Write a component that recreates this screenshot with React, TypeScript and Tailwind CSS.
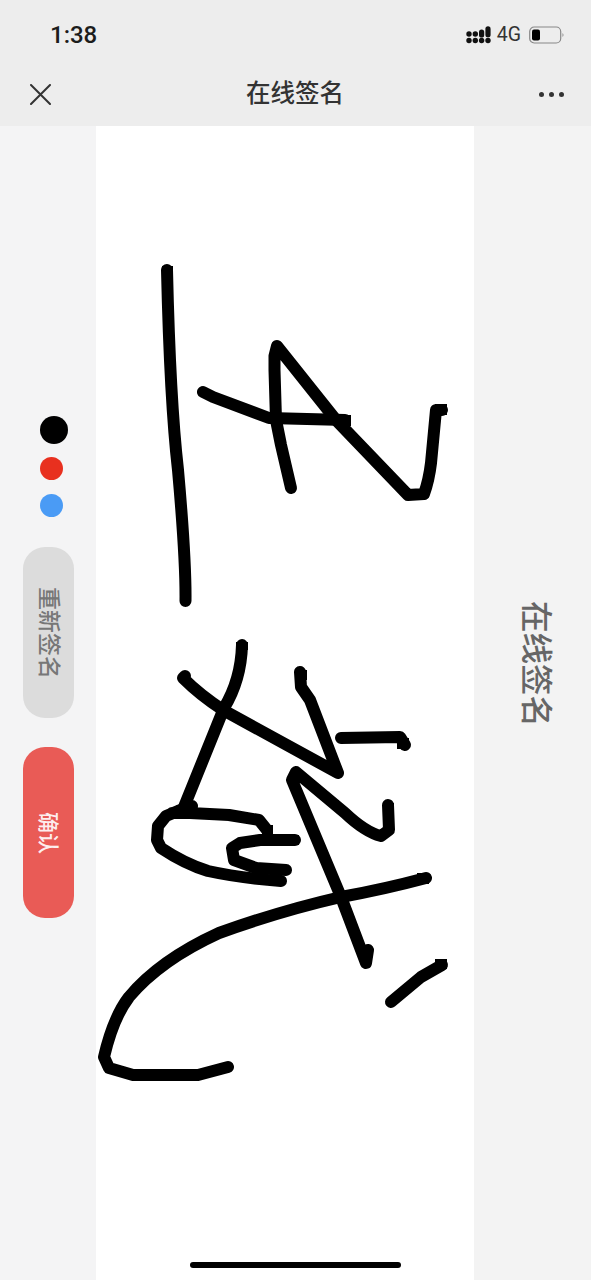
import React from 'react';

const CJK = "font-['Liberation_Sans','Noto_Sans_CJK_SC',sans-serif]";

// pen strokes, in page coordinates (the svg viewBox starts at the panel's corner)
const strokes = [
  'M167 270 Q170 400 178 470 Q186 560 185.500 601',
  'M203 392 L213 397 L269 418 L345 420',
  'M291 488 L281 445 L276 420 L274.500 370 L274.500 356 L277 346 L336 420 L408 495 L424 494 Q429 480 431 463 L436 410 L442 410',
  'M242 645 Q241 680 224 708 L184 807',
  'M192 806 L178 811 L166 816 L158 826 L157 840 L161 848 Q185 864 208 871 Q240 878 281 881 M172 813 L190 813 L229 815 L259 820 L267 830',
  'M295 840 L260 840 L240 843 L232 848 L234 860 L256 868 L286 870',
  'M185 676 L183 678 Q200 695 223 710 L338 773 L310 700 L301 687 L300 672',
  'M341 738 L400 737 L405 745',
  'M388 805 L389 830 L381 836 Q365 832 345 813 L296 772 L292 780 L341 897 L366 963 L368 950',
  'M426 878 Q385 889 341 897 Q280 911 219 933 Q160 960 129 997 Q113 1018 104 1057 L109 1068 L133 1075 L198 1075 L228 1067',
  'M391 1002 L421 977 L442 965',
];

// the pen's squared-off ends
const tips = [
  [162, 266, 11, 12],
  [338, 415, 13, 11],
  [435, 404, 12, 11],
  [236, 642, 12, 8],
  [295, 670, 12, 10],
  [397, 738, 12, 11],
  [383, 803, 11, 10],
  [288, 835, 11, 10],
  [417, 873, 12, 11],
  [435, 959, 12, 10],
  [262, 825, 11, 10],
];

const Signature: React.FC = () => (
  <svg viewBox="96 126 378 1154" className="w-full h-full block">
    {strokes.map((d, i) => (
      <path key={i} d={d} fill="none" stroke="#000" strokeWidth="12" strokeLinecap="round" strokeLinejoin="round" />
    ))}
    {tips.map(([x, y, w, h], i) => (
      <rect key={i} x={x} y={y} width={w} height={h} fill="#000" />
    ))}
  </svg>
);

const SignalIcon: React.FC = () => (
  <svg width="25" height="18" viewBox="0 0 25 18" fill="#111">
    <circle cx="3" cy="8" r="2.700" />
    <circle cx="3" cy="14.500" r="2.700" />
    <circle cx="9.300" cy="8" r="2.700" />
    <circle cx="9.300" cy="14.500" r="2.700" />
    <rect x="13" y="3.500" width="5.200" height="8" rx="2.600" />
    <circle cx="15.600" cy="14.500" r="2.700" />
    <rect x="19.400" y="0.300" width="5.200" height="11" rx="2.600" />
    <circle cx="22" cy="14.500" r="2.700" />
  </svg>
);

const BatteryIcon: React.FC = () => (
  <svg width="36" height="18" viewBox="0 0 36 18">
    <rect x="0.700" y="1" width="31" height="16" rx="4.500" fill="none" stroke="#888" strokeWidth="1.200" />
    <rect x="3" y="3.500" width="8" height="11" rx="2" fill="#000" />
    <path d="M33.500 7 Q35.500 9 33.500 11 Z" fill="#888" />
  </svg>
);

const App: React.FC = () => {
  return (
    <div className={`relative h-[1280px] w-full overflow-hidden flex flex-col bg-[#f4f4f5] ${CJK}`}>
      {/* status bar + wechat nav */}
      <div className="shrink-0 h-[126px] bg-[#ededed]">
        <div className="h-[70px] flex items-center justify-between pl-[50px] pr-[26px] font-['Roboto',sans-serif]">
          <span className="text-[24px] font-medium text-[#1c1c1c] leading-none">1:38</span>
          <div className="flex items-center">
            <SignalIcon />
            <span className="ml-[6px] mr-[8px] text-[19.500px] text-[#333] leading-none">4G</span>
            <BatteryIcon />
          </div>
        </div>
        <div className="h-[48px] flex items-center justify-between pl-[30px] pr-[27px]">
          <svg width="21" height="21" viewBox="0 0 21 21" stroke="#333" strokeWidth="2" strokeLinecap="round">
            <path d="M1 1 L20 20 M20 1 L1 20" />
          </svg>
          <span className="text-[24.500px] font-medium text-[#333] leading-none">在线签名</span>
          <div className="flex items-center gap-[5px]">
            <span className="w-[5px] h-[5px] rounded-full bg-[#333]"></span>
            <span className="w-[5px] h-[5px] rounded-full bg-[#333]"></span>
            <span className="w-[5px] h-[5px] rounded-full bg-[#333]"></span>
          </div>
        </div>
      </div>

      <div className="flex-1 flex min-h-0">
        {/* tools */}
        <div className="w-[96px] shrink-0 pt-[290px] pl-[23px] flex flex-col">
          <div className="w-[28px] h-[28px] rounded-full bg-black ml-[17px]"></div>
          <div className="w-[23px] h-[23px] rounded-full bg-[#e8301f] ml-[17px] mt-[13px]"></div>
          <div className="w-[23px] h-[23px] rounded-full bg-[#4a9bf5] ml-[17px] mt-[14px]"></div>
          <button className="w-[51px] h-[171px] mt-[30px] rounded-[22px] bg-[#dcdcdc] flex items-center justify-center">
            <span className="[writing-mode:vertical-rl] [text-orientation:sideways] text-[23px] font-medium leading-none text-[#777]">重新签名</span>
          </button>
          <button className="w-[51px] h-[171px] mt-[29px] rounded-[22px] bg-[#e95b56] flex items-center justify-center">
            <span className="[writing-mode:vertical-rl] [text-orientation:sideways] text-[21px] font-medium leading-none text-[#fdeeee]">确认</span>
          </button>
        </div>

        {/* canvas */}
        <div className="w-[378px] shrink-0 bg-white">
          <Signature />
        </div>

        {/* rotated title */}
        <div className="flex-1 bg-[#f3f3f3] flex justify-center pt-[475px] pl-[5px]">
          <span className="[writing-mode:vertical-rl] [text-orientation:sideways] text-[31.500px] font-medium leading-none text-[#666] h-fit">在线签名</span>
        </div>
      </div>

      {/* home indicator */}
      <div className="absolute left-[190px] bottom-[12px] w-[211px] h-[6px] rounded-full bg-black"></div>
    </div>
  );
};

export default App;
